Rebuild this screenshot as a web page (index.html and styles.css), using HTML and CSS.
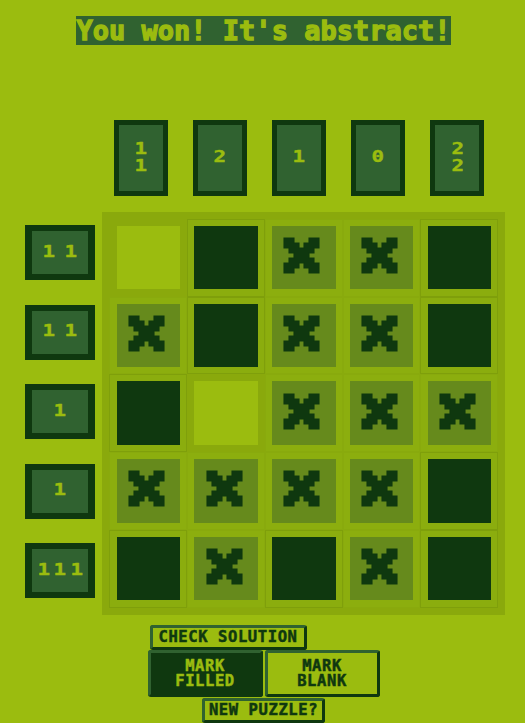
FILE: index.html
```html
<!DOCTYPE html>
<html lang="en">
<head>
<meta charset="utf-8">
<title>Nonogram</title>
<link rel="stylesheet" href="styles.css">
</head>
<body>
<svg class="defs" width="0" height="0" aria-hidden="true">
  <symbol id="x" viewBox="0 0 7 7" overflow="visible">
    <path d="M0 0h2v1h1v1h1V1h1V0h2v2H6v1H5v1h1v1h1v2H5V6H4V5H3v1H2v1H0V5h1V4h1V3H1V2H0z"/>
  </symbol>
</svg>
<main class="page">
  <h1 class="title"><span class="title-text">You won! It's abstract!</span></h1>
  <section class="col-clues">
    <div class="clue col-clue"><span>1</span><span>1</span></div>
    <div class="clue col-clue"><span>2</span></div>
    <div class="clue col-clue"><span>1</span></div>
    <div class="clue col-clue"><span>0</span></div>
    <div class="clue col-clue"><span>2</span><span>2</span></div>
  </section>
  <section class="play">
    <div class="row-clues">
      <div class="clue row-clue"><span>1</span><span>1</span></div>
      <div class="clue row-clue"><span>1</span><span>1</span></div>
      <div class="clue row-clue"><span>1</span></div>
      <div class="clue row-clue"><span>1</span></div>
      <div class="clue row-clue"><span>1</span><span>1</span><span>1</span></div>
    </div>
    <div class="board">
      <div class="cell blank"><div class="tile"></div></div>
      <div class="cell filled"><div class="tile"></div></div>
      <div class="cell marked"><div class="tile"><svg class="x"><use href="#x"/></svg></div></div>
      <div class="cell marked"><div class="tile"><svg class="x"><use href="#x"/></svg></div></div>
      <div class="cell filled"><div class="tile"></div></div>

      <div class="cell marked"><div class="tile"><svg class="x"><use href="#x"/></svg></div></div>
      <div class="cell filled"><div class="tile"></div></div>
      <div class="cell marked"><div class="tile"><svg class="x"><use href="#x"/></svg></div></div>
      <div class="cell marked"><div class="tile"><svg class="x"><use href="#x"/></svg></div></div>
      <div class="cell filled"><div class="tile"></div></div>

      <div class="cell filled"><div class="tile"></div></div>
      <div class="cell blank"><div class="tile"></div></div>
      <div class="cell marked"><div class="tile"><svg class="x"><use href="#x"/></svg></div></div>
      <div class="cell marked"><div class="tile"><svg class="x"><use href="#x"/></svg></div></div>
      <div class="cell marked"><div class="tile"><svg class="x"><use href="#x"/></svg></div></div>

      <div class="cell marked"><div class="tile"><svg class="x"><use href="#x"/></svg></div></div>
      <div class="cell marked"><div class="tile"><svg class="x"><use href="#x"/></svg></div></div>
      <div class="cell marked"><div class="tile"><svg class="x"><use href="#x"/></svg></div></div>
      <div class="cell marked"><div class="tile"><svg class="x"><use href="#x"/></svg></div></div>
      <div class="cell filled"><div class="tile"></div></div>

      <div class="cell filled"><div class="tile"></div></div>
      <div class="cell marked"><div class="tile"><svg class="x"><use href="#x"/></svg></div></div>
      <div class="cell filled"><div class="tile"></div></div>
      <div class="cell marked"><div class="tile"><svg class="x"><use href="#x"/></svg></div></div>
      <div class="cell filled"><div class="tile"></div></div>
    </div>
  </section>
  <section class="controls">
    <button class="btn btn-check">CHECK SOLUTION</button>
    <div class="mode">
      <button class="btn btn-mode active">MARK<br>FILLED</button>
      <button class="btn btn-mode">MARK<br>BLANK</button>
    </div>
    <button class="btn btn-new">NEW PUZZLE?</button>
  </section>
</main>
</body>
</html>
```
FILE: styles.css
```css
* { box-sizing: border-box; }
html, body { margin: 0; height: 100%; }
body {
  background: #9bbc0f;
  color: #0f380f;
  font-family: "DejaVu Sans Mono", "Liberation Mono", monospace;
  font-weight: 700;
  overflow: hidden;
}
.defs { position: absolute; }
.page { display: flex; flex-direction: column; }

.title {
  margin: 16px 0 0;
  font-size: 27px;
  line-height: 29px;
  font-weight: 700;
  text-align: center;
  padding-left: 2px;
}
.title-text {
  display: inline-block;
  width: 375px;
  height: 29px;
  background: #306230;
  color: #9bbc0f;
  white-space: nowrap;
  -webkit-text-stroke: 1.3px #9bbc0f;
}

.col-clues {
  display: flex;
  gap: 25.1px;
  margin: 75px 0 0 114px;
}
.clue {
  display: flex;
  background: #306230;
  border: solid #0f380f;
  color: #9bbc0f;
  font-size: 16px;
  line-height: 17px;
  -webkit-text-stroke: 0.4px #9bbc0f;
}
.clue span { transform: scaleX(1.3); }
.col-clue {
  flex-direction: column;
  justify-content: center;
  align-items: center;
  width: 54px;
  height: 76px;
  border-width: 5px;
  padding-bottom: 3px;
}
.row-clue {
  justify-content: space-evenly;
  align-items: center;
  width: 70px;
  height: 55px;
  border-width: 6.5px 7px;
  padding-bottom: 3px;
}

.play {
  display: flex;
  gap: 7px;
  margin: 16px 0 0 25px;
}
.row-clues {
  display: flex;
  flex-direction: column;
  gap: 24.5px;
  margin-top: 13px;
}
.board {
  display: grid;
  grid-template-columns: repeat(5, 77.75px);
  grid-auto-rows: 77.75px;
  padding: 6.8px 0 0 7.4px;
  width: 403px;
  height: 403px;
  background: #8aa90c;
}
.cell {
  display: flex;
  align-items: center;
  justify-content: center;
  border: 1px solid transparent;
}
.tile {
  display: flex;
  align-items: center;
  justify-content: center;
  width: 63.5px;
  height: 63.5px;
}
.blank .tile { background: #9bbc0f; }
.filled { background: #8bad0e; border-color: #7f9f0b; }
.filled .tile { background: #0f380f; }
.marked { background: #8cae0e; border-color: #89aa0d; }
.marked .tile { background: #668a1c; padding: 0 4px 4px 0; }
.x {
  width: 35px;
  height: 35px;
  fill: #0f380f;
  stroke: #0f380f;
  stroke-width: 0.22;
  overflow: visible;
}

.controls {
  display: flex;
  flex-direction: column;
  align-items: center;
  margin-top: 10px;
  padding-left: 2px;
}
.btn {
  display: block;
  margin: 0;
  padding: 0;
  font: inherit;
  font-size: 15.5px;
  line-height: 15px;
  letter-spacing: 0.6px;
  color: #0f380f;
  background: #9bbc0f;
  border: 3px solid;
  border-color: #306230 #0f380f #0f380f #306230;
  border-radius: 3px;
  -webkit-text-stroke: 0.5px currentColor;
}
.btn-check { width: 157px; height: 25px; margin-right: 71px; }
.mode { display: flex; gap: 2px; }
.btn-mode { width: 115px; height: 47px; }
.btn-mode.active { background: #0f380f; color: #9bbc0f; }
.btn-new { width: 123px; height: 25px; margin-top: 1px; }
```
